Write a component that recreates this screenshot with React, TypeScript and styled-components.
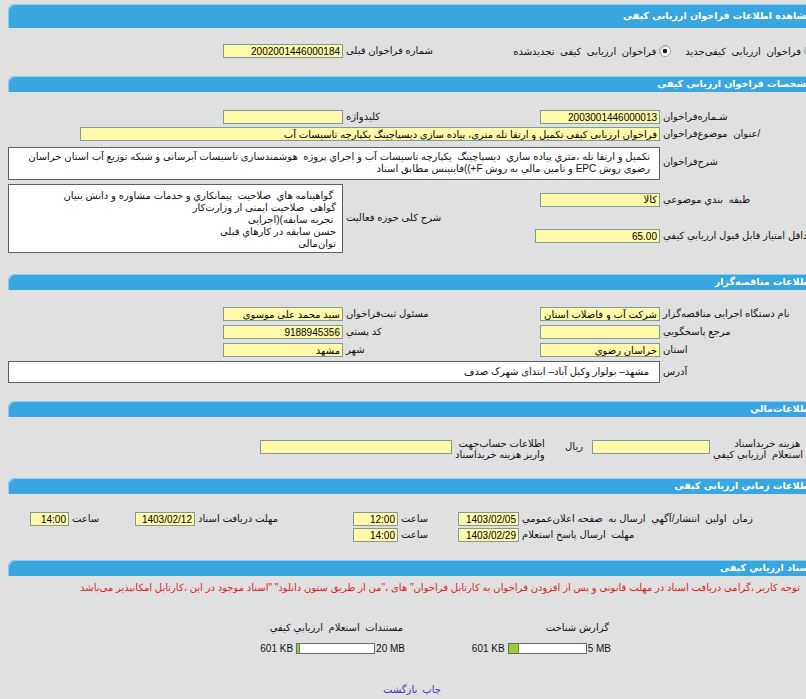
import React from 'react';
import styled, { createGlobalStyle } from 'styled-components';

const GlobalStyle = createGlobalStyle`
  html, body { margin: 0; padding: 0; background: #e0e0e0; overflow: hidden; }
  body {
    font-family: "Liberation Sans", "DejaVu Sans", sans-serif;
    font-size: 10px;
    color: #111;
  }
  #root { width: 806px; }
`;

const Page = styled.main`
  direction: rtl;
  width: 808px;
  margin: 4px 0 0 8px;
`;

const Header = styled.h2<{ $tall?: boolean }>`
  margin: 0;
  box-sizing: border-box;
  height: ${(p) => (p.$tall ? 24 : 16)}px;
  line-height: ${(p) => (p.$tall ? 24 : 16)}px;
  padding-right: 4px;
  background: #39a6e0;
  border-top-left-radius: 7px;
  box-shadow: inset 1px 1px 0 #86cef3;
  color: #fff;
  font-family: "DejaVu Sans", sans-serif;
  font-size: 9.5px;
  font-weight: bold;
  white-space: nowrap;
  overflow: hidden;
`;

const Grid = styled.div<{ $pt: number; $pb: number; $gap?: number }>`
  display: grid;
  grid-template-columns: 156px 120px 197px 120px 1fr;
  align-items: center;
  row-gap: ${(p) => p.$gap ?? 3}px;
  padding: ${(p) => p.$pt}px 0 ${(p) => p.$pb}px;
`;

const FinanceGrid = styled.div`
  display: grid;
  grid-template-columns: 106px 118px 47px 93px 192px 1fr;
  align-items: start;
  padding: 21px 0 18px;
`;

const TimeGrid = styled.div`
  display: grid;
  grid-template-columns: 297px 61px 60px 45px 158px 60px 66px 39px 1fr;
  align-items: center;
  row-gap: 2px;
  padding: 18px 0 18px;
`;

const Label = styled.label<{ $col?: string; $row?: string }>`
  justify-self: end;
  justify-self: unsafe end;
  white-space: pre;
  padding-left: 3px;
  line-height: 12px;
  ${(p) => (p.$col ? `grid-column: ${p.$col};` : '')}
  ${(p) => (p.$row ? `grid-row: ${p.$row};` : '')}
`;

const TwoLine = styled.label`
  justify-self: end;
  white-space: pre;
  padding-left: 3px;
  line-height: 11px;
`;

const Unit = styled.span`
  justify-self: start;
  padding-right: 9px;
  margin-top: 3px;
`;

const Field = styled.input<{ $w?: number; $col?: string; $row?: string; $top?: number }>`
  box-sizing: border-box;
  justify-self: start;
  width: ${(p) => (p.$w ? `${p.$w}px` : '100%')};
  height: 14px;
  margin: ${(p) => p.$top ?? 0}px 0 0 0;
  padding: 0 2px;
  border: 1px solid #7d9b9b;
  background: #fff9a9;
  font-family: "Liberation Sans", "DejaVu Sans", sans-serif;
  font-size: 10px;
  color: #000;
  direction: rtl;
  outline: none;
  ${(p) => (p.$col ? `grid-column: ${p.$col};` : '')}
  ${(p) => (p.$row ? `grid-row: ${p.$row};` : '')}
`;

const TextBox = styled.div<{
  $h: number;
  $col: string;
  $row?: string;
  $pt?: number;
  $pr?: number;
  $mt?: number;
}>`
  box-sizing: border-box;
  height: ${(p) => p.$h}px;
  margin-top: ${(p) => p.$mt ?? 0}px;
  background: #fff;
  border: 1px solid #5f5f5f;
  padding: ${(p) => p.$pt ?? 3}px ${(p) => p.$pr ?? 9}px 0 4px;
  line-height: 12px;
  white-space: pre;
  overflow: hidden;
  grid-column: ${(p) => p.$col};
  ${(p) => (p.$row ? `grid-row: ${p.$row};` : '')}
`;

const RadioGroup = styled.div`
  grid-column: 1 / 3;
  justify-self: start;
  display: flex;
  align-items: center;
  gap: 14px;
  white-space: pre;
`;

const RadioOption = styled.label`
  display: flex;
  align-items: center;
  gap: 3px;
`;

const RadioDot = styled.span<{ $checked?: boolean }>`
  box-sizing: border-box;
  width: 12px;
  height: 12px;
  border-radius: 50%;
  border: 1px solid #a0a0a0;
  background: ${(p) =>
    p.$checked ? 'radial-gradient(circle, #1a1a1a 0 2px, #fff 2.6px)' : '#fff'};
  box-shadow: inset 1px 1px 1px #c8c8c8;
`;

const Notice = styled.p`
  margin: 0;
  padding: 6px 16px 0 0;
  line-height: 12px;
  color: #d91f1f;
  white-space: nowrap;
`;

const Docs = styled.div`
  display: flex;
  gap: 20px;
  padding: 28px 205px 0 0;
`;

const DocCell = styled.div`
  width: 186px;
  display: flex;
  flex-direction: column;
  align-items: flex-start;
  gap: 8px;
`;

const DocTitle = styled.span`
  line-height: 12px;
  white-space: pre;
  margin-right: 2px;
`;

const Meter = styled.div`
  direction: ltr;
  display: flex;
  align-items: center;
  height: 12px;
  white-space: nowrap;
`;

const MeterText = styled.span<{ $gap: number; $side: 'left' | 'right' }>`
  ${(p) => (p.$side === 'left' ? `margin-right: ${p.$gap}px;` : `margin-left: ${p.$gap}px;`)}
`;

const MeterTrack = styled.div`
  box-sizing: border-box;
  width: 79px;
  height: 11px;
  border: 1px solid #6a6a6a;
  background: #fff;
  display: flex;
`;

const MeterFill = styled.div`
  height: 100%;
  background: #9ccc34;
  border-right: 1px solid #6f8f20;
`;

const Links = styled.nav`
  display: flex;
  justify-content: center;
  gap: 5px;
  padding-top: 30px;
  line-height: 12px;
`;

const LinkText = styled.a`
  color: #3535c8;
  text-decoration: none;
  cursor: pointer;
`;

function SizeMeter({ used, max, maxLabel }: { used: number; max: number; maxLabel: string }) {
  const pct = Math.max(3, Math.min(100, (used / max) * 100));
  return (
    <Meter>
      <MeterText $side="left" $gap={3}>
        601 KB
      </MeterText>
      <MeterTrack>
        <MeterFill style={{ width: `${pct}%` }} />
      </MeterTrack>
      <MeterText $side="right" $gap={1}>
        {maxLabel}
      </MeterText>
    </Meter>
  );
}

export default function App() {
  return (
    <>
      <GlobalStyle />
      <Page>
        <Header $tall>مشاهده اطلاعات فراخوان ارزیابی کیفی</Header>
        <Grid $pt={16} $pb={18}>
          <RadioGroup>
            <RadioOption>
              <RadioDot />
              {'فراخوان  ارزیابی  کیفی‌جدید'}
            </RadioOption>
            <RadioOption>
              <RadioDot $checked />
              {'فراخوان  ارزیابی  کیفی  تجدیدشده'}
            </RadioOption>
          </RadioGroup>
          <Label>شماره فراخوان قبلی</Label>
          <Field readOnly value="2002001446000184" />
        </Grid>

        <Header>مشخصات فراخوان ارزیابی کیفی</Header>
        <Grid $pt={18} $pb={21}>
          <Label $col="1" $row="1">شـماره‌فراخوان</Label>
          <Field $col="2" $row="1" readOnly value="2003001446000013" />
          <Label $col="3" $row="1">کلیدواژه</Label>
          <Field $col="4" $row="1" readOnly value="" />

          <Label $col="1" $row="2">{'/عنوان  موضوع‌فراخوان'}</Label>
          <Field
            $col="2 / -1"
            $row="2"
            $w={580}
            readOnly
            value="فراخوان ارزیابی کیفی تکمیل و ارتقا تله متری، پیاده سازی دیسپاچینگ یکپارچه تاسیسات آب"
          />

          <Label $col="1" $row="3">شرح‌فراخوان</Label>
          <TextBox $h={33} $col="2 / -1" $row="3" $mt={3}>
            {'تکمیل و ارتقا تله ،متري پیاده سازي  دیسپاچینگ  یکپارچه تاسیسات آب و اجراي پروژه  هوشمندسازی تاسیسات آبرسانی و شبکه توزیع آب استان خراسان\nرضوی روش EPC و تامین مالي به روش F+))فاینینس مطابق اسناد'}
          </TextBox>

          <Label $col="1" $row="4">{'طبقه  بندي موضوعي'}</Label>
          <Field $col="2" $row="4" readOnly value="کالا" />
          <Label $col="3" $row="4 / 6">شرح کلی حوزه فعالیت</Label>
          <TextBox $h={69} $col="4 / -1" $row="4 / 6" $pt={5} $pr={6} $mt={1}>
            {' گواهینامه هاي  صلاحیت  پیمانکاري و خدمات مشاوره و دانش بنیان\nگواهی  صلاحیت ایمنی از وزارت‌کار\n تجربه سابقه)(اجرایی\nحسن سابقه در کارهاي قبلی\nتوان‌مالی'}
          </TextBox>

          <Label $col="1" $row="5">حداقل امتیاز قابل قبول ارزیابي کیفي</Label>
          <Field $col="2 / 4" $row="5" $w={125} readOnly value="65.00" />
        </Grid>

        <Header>اطلاعات مناقصه‌گزار</Header>
        <Grid $pt={17} $pb={18} $gap={4}>
          <Label>نام دستگاه اجرایی مناقصه‌گزار</Label>
          <Field readOnly value="شرکت آب و فاضلاب استان" />
          <Label>مسئول ثبت‌فراخوان</Label>
          <Field readOnly value="سید محمد علی موسوی" />
          <span />

          <Label>مرجع پاسخگويي</Label>
          <Field readOnly value="" />
          <Label>کد پستي</Label>
          <Field readOnly value="9188945356" />
          <span />

          <Label>استان</Label>
          <Field readOnly value="خراسان رضوی" />
          <Label>شهر</Label>
          <Field readOnly value="مشهد" />
          <span />

          <Label>آدرس</Label>
          <TextBox $h={22} $col="2 / -1" $pt={4} $pr={10}>
            {'مشهد– بولوار وکیل آباد– ابتدای شهرک صدف'}
          </TextBox>
        </Grid>

        <Header>اطلاعات‌مالي</Header>
        <FinanceGrid>
          <TwoLine>{' هزینه خرید‌اسناد \nاستعلام  ارزیابي کیفي'}</TwoLine>
          <Field $top={2} readOnly value="" />
          <Unit>ریال</Unit>
          <TwoLine>{'اطلاعات حساب‌جهت\nواریز هزینه خرید‌اسناد'}</TwoLine>
          <Field $top={2} readOnly value="" />
        </FinanceGrid>

        <Header>اطلاعات زماني ارزیابی کیفی</Header>
        <TimeGrid>
          <Label>{'زمان  اولین  انتشار/آگهي  ارسال به  صفحه اعلان‌عمومي'}</Label>
          <Field readOnly value="1403/02/05" />
          <Label>ساعت</Label>
          <Field readOnly value="12:00" />
          <Label>مهلت دريافت اسناد</Label>
          <Field readOnly value="1403/02/12" />
          <Label>ساعت</Label>
          <Field readOnly value="14:00" />
          <span />

          <Label $col="1">{'مهلت  ارسال پاسخ استعلام'}</Label>
          <Field readOnly value="1403/02/29" />
          <Label>ساعت</Label>
          <Field readOnly value="14:00" />
        </TimeGrid>

        <Header>اسناد ارزيابي کیفی</Header>
        <Notice>
          توجه کاربر ،گرامی دریافت اسناد در مهلت قانونی و پس از افزودن فراخوان به کارتابل فراخوان" های ،"من از طریق ستون دانلود" "اسناد موجود در این ،کارتابل امکانپذیر می‌باشد
        </Notice>
        <Docs>
          <DocCell>
            <DocTitle>گزارش شناخت</DocTitle>
            <SizeMeter used={601} max={5 * 1024} maxLabel="5 MB" />
          </DocCell>
          <DocCell>
            <DocTitle>{'مستندات  استعلام  ارزیابي کیفي'}</DocTitle>
            <SizeMeter used={601} max={20 * 1024} maxLabel="20 MB" />
          </DocCell>
        </Docs>
        <Links>
          <LinkText>چاپ</LinkText>
          <LinkText>بازگشت</LinkText>
        </Links>
      </Page>
    </>
  );
}
